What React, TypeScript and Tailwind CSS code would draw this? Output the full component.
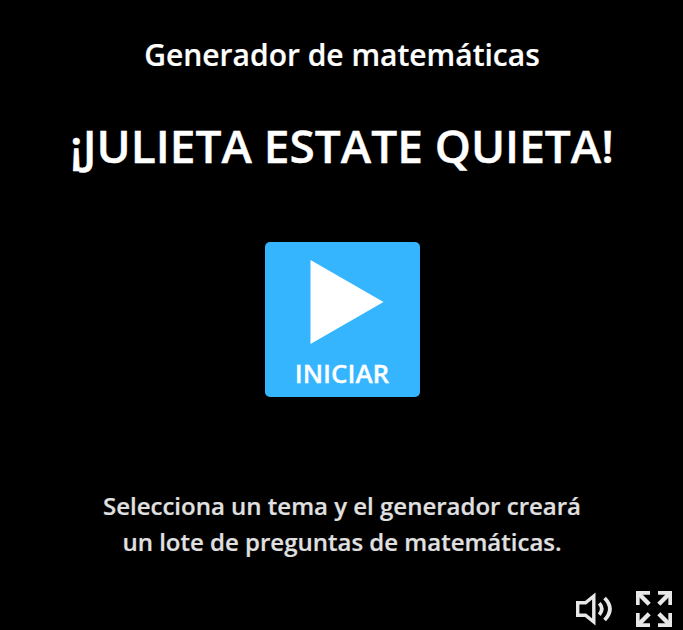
export default function App() {
  return (
    <main className="flex h-[630px] w-[684px] flex-col items-center overflow-hidden bg-black font-['Open_Sans',sans-serif] font-semibold text-white">
      <p className="mt-[34px] text-[30px] leading-[41px] whitespace-nowrap [-webkit-text-stroke:0.2px]">Generador de matemáticas</p>
      <h1 className="mt-[38px] text-[46px] leading-[65px] whitespace-nowrap [-webkit-text-stroke:0.4px]">¡JULIETA ESTATE QUIETA!</h1>
      <button className="mt-[64px] flex h-[155px] w-[155px] flex-col items-center rounded-[5px] bg-[#36b5ff]">
        <svg className="mt-[18px] ml-[10px] h-[84px] w-[74px]" viewBox="0 0 74 84" fill="white">
          <path d="M.5 0 73.5 42 .5 84Z" />
        </svg>
        <span className="mt-[11px] text-[26px] leading-[36px] [-webkit-text-stroke:0.3px]">INICIAR</span>
      </button>
      <p className="mt-[91px] text-center text-[24px] leading-[36px] text-[#e0e0e0] [-webkit-text-stroke:0.2px]">
        Selecciona un tema y el generador creará<br />un lote de preguntas de matemáticas.
      </p>
      <div className="mt-[31px] flex w-full items-center justify-end gap-[24px] pr-[12px] text-[#e8e8e8]">
        <svg className="h-[36px] w-[36px] overflow-visible" viewBox="576 591 36 36" fill="none" stroke="currentColor" strokeWidth="3.4">
          <path d="M577.7 602.7h7.8l8.3-6.7v26l-8.300-6.700h-7.800Z" />
          <path d="M599.300 603.300q5 5.500 0 11.400M604.600 598q10.600 11 0 22" strokeWidth="3.700" />
        </svg>
        <svg className="h-[36px] w-[36px]" viewBox="0 0 36 36" fill="none" stroke="currentColor">
          <path strokeWidth="3.700" d="M1.800 14V1.800h12.200M22 1.800h12.200v12.200M1.800 22v12.200h12.200M34.200 22v12.200h-12.200" />
          <path strokeWidth="4.400" d="M2 2l11.200 11.200M34 2 22.800 13.200M2 34l11.200-11.200M34 34 22.800 22.800" />
        </svg>
      </div>
    </main>
  );
}
